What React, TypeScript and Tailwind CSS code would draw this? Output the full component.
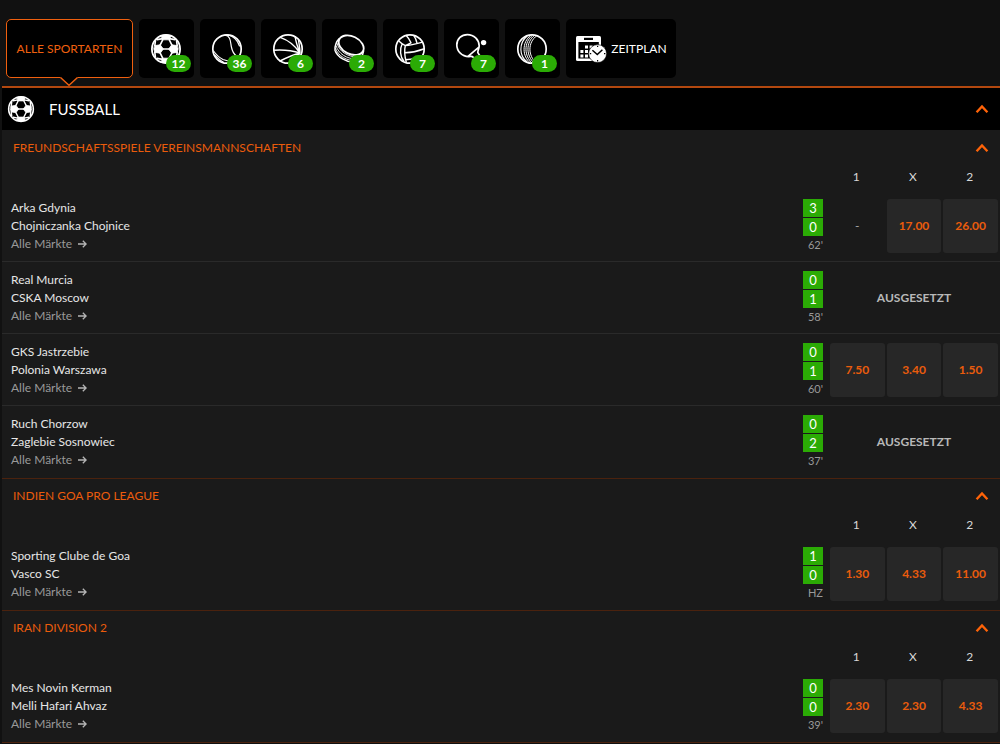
import type { ReactNode } from "react";

type Match = {
  home: string;
  away: string;
  score: [number, number];
  time: string;
  odds: (string | null)[] | null;
};

type League = { name: string; matches: Match[] };

const leagues: League[] = [
  {
    name: "FREUNDSCHAFTSSPIELE VEREINSMANNSCHAFTEN",
    matches: [
      { home: "Arka Gdynia", away: "Chojniczanka Chojnice", score: [3, 0], time: "62'", odds: [null, "17.00", "26.00"] },
      { home: "Real Murcia", away: "CSKA Moscow", score: [0, 1], time: "58'", odds: null },
      { home: "GKS Jastrzebie", away: "Polonia Warszawa", score: [0, 1], time: "60'", odds: ["7.50", "3.40", "1.50"] },
      { home: "Ruch Chorzow", away: "Zaglebie Sosnowiec", score: [0, 2], time: "37'", odds: null },
    ],
  },
  {
    name: "INDIEN GOA PRO LEAGUE",
    matches: [
      { home: "Sporting Clube de Goa", away: "Vasco SC", score: [1, 0], time: "HZ", odds: ["1.30", "4.33", "11.00"] },
    ],
  },
  {
    name: "IRAN DIVISION 2",
    matches: [
      { home: "Mes Novin Kerman", away: "Melli Hafari Ahvaz", score: [0, 0], time: "39'", odds: ["2.30", "2.30", "4.33"] },
    ],
  },
];

function Glyph({ children, className = "size-8" }: { children: ReactNode; className?: string }) {
  return (
    <svg viewBox="0 0 32 32" className={className} fill="none" stroke="white" strokeWidth="1.7" strokeLinecap="round" strokeLinejoin="round" aria-hidden="true">
      {children}
    </svg>
  );
}

function Football({ className }: { className?: string }) {
  return (
    <Glyph className={className}>
      <circle cx="16" cy="16" r="14.1" strokeWidth="1.8" />
      <g fill="white" strokeWidth="0.8">
        <path d="M4.8 12.6 L10.2 11.8 L13.4 16 L10.2 20.2 L4.8 19.4 L3.8 16 Z" />
        <path d="M27.2 12.6 L21.8 11.8 L18.6 16 L21.8 20.2 L27.2 19.4 L28.2 16 Z" />
        <path d="M10.8 2.6 Q16 1 21.2 2.6 L19.3 6.8 L12.7 6.8 Z" />
        <path d="M10.8 29.4 Q16 31 21.2 29.4 L19.3 25.2 L12.7 25.2 Z" />
      </g>
      <path d="M13 16H19M10.2 11.8L12.7 6.8M21.8 11.8L19.3 6.8M10.2 20.2L12.7 25.2M21.8 20.2L19.3 25.2M4.8 12.6L5.4 8.2M27.2 12.6L26.6 8.2M4.8 19.4L5.4 23.8M27.2 19.4L26.6 23.8M7 6.6L12.7 5.6M25 6.6L19.3 5.6M7 25.4L12.7 26.4M25 25.4L19.3 26.4" strokeWidth="1.6" />
    </Glyph>
  );
}

const sports: { label: string; count: number; icon: ReactNode }[] = [
  { label: "Fussball", count: 12, icon: <Football /> },
  {
    label: "Tennis",
    count: 36,
    icon: (
      <Glyph>
        <circle cx="16" cy="16" r="14.2" />
        <path d="M14 2.2C20 3 19.3 9 20.4 14C21.3 18.5 23 21.5 26 23.5M17 2C24 3.5 27 9 28.5 13" strokeWidth="1.2" />
        <path d="M2.6 18C5 21.5 8 24.5 12 26.4C16 28 20 28.4 23 28M3.6 22C7 25 9 27.5 12.5 29.3" strokeWidth="1.1" />
      </Glyph>
    ),
  },
  {
    label: "Basketball",
    count: 6,
    icon: (
      <Glyph>
        <circle cx="16" cy="16" r="14.2" />
        <path d="M8.2 4.3C16 7 23 12.5 28 20M1.9 17.2C11 16.6 20 17.4 28 20M23.2 3.8C24 10 26 15 28 20M26.5 7C27 11 28 15 28 20M28 20C22 21.5 14 25 8 28M28 20C26 24 23 27 20 29.6" strokeWidth="1.4" />
      </Glyph>
    ),
  },
  {
    label: "Eishockey",
    count: 2,
    icon: (
      <Glyph>
        <ellipse cx="18.2" cy="12.2" rx="13.2" ry="8.8" transform="rotate(26 18.2 12.2)" strokeWidth="1.8" />
        <path d="M6 5.8C3.6 8 1.4 13.5 2 17.2C4 23.6 13.6 30 22 29C26 28 30 23 30.6 18" strokeWidth="1.5" />
        <path d="M4.2 10.5C5.2 17.6 15 24.4 24 23.9M3.2 13C5 20.4 14.5 26.7 23.5 25.7M2.5 15.3C5 23 14 28.4 23 27.4" strokeWidth="0.9" />
      </Glyph>
    ),
  },
  {
    label: "Volleyball",
    count: 7,
    icon: (
      <Glyph>
        <circle cx="16" cy="16" r="14.2" />
        <path d="M5.4 8.4Q8 11 11.3 12.6C17 12.3 22.4 10.8 27.8 9.3M12.2 2.6Q15 5.5 17 9.8L11.3 12.6C10.3 17 10.6 23 12.2 28.8M20 2.8Q22.2 5.8 23 10.2M10.9 19.8C17 19.5 24 18.2 29.6 16M11.7 26.8C17 26.4 22 25.6 27 24.2M8.2 10.8C5.6 16 6 24 9.8 28" strokeWidth="1.4" />
      </Glyph>
    ),
  },
  {
    label: "Tischtennis",
    count: 7,
    icon: (
      <Glyph>
        <path d="M14 23.6C7 23.8 1.8 18.2 1.8 12C1.8 5.5 6.5 1.6 12.4 1.6C19 1.6 24 6.8 24.2 12.8C24.2 15.6 22.6 17.4 22.8 19.6L27 26L22.5 29L18.4 24.4C17 22.6 15.6 23.5 14 23.6ZM13 23.4L23.6 14.4" />
        <circle cx="28.6" cy="9.6" r="2.7" fill="white" stroke="none" />
      </Glyph>
    ),
  },
  {
    label: "Cricket",
    count: 1,
    icon: (
      <Glyph>
        <circle cx="16" cy="16" r="14.2" />
        <path d="M11 3.2C2.6 10 3.1 23 11 28.8" strokeWidth="1.1" />
        <path d="M14.4 2.5C5.6 9.5 6.2 23.5 14 29.7M16.4 2.2C7.4 9.8 8.2 23 16 30M18.4 2.4C9.4 9.5 10.2 23 18 30M20.6 2.8C11.4 9.5 12 23 20 29.6" strokeWidth="1" />
      </Glyph>
    ),
  },
];

function ScheduleIcon() {
  return (
    <svg viewBox="0 0 32 28" className="h-7 w-8" aria-hidden="true">
      <rect x="1" y="1" width="25" height="25" rx="1.5" fill="white" />
      <rect x="9" y="2.8" width="9" height="2.2" fill="black" />
      <rect x="3.4" y="7" width="20.4" height="16.5" fill="black" />
      <path d="M10 10.5h3v3h-3zM14.6 10.5h3v3h-3zM19.2 10.5h3v3h-3zM5.4 15h3v3h-3zM10 15h3v3h-3zM5.4 19.4h3v3h-3zM10 19.4h3v3h-3z" fill="white" />
      <circle cx="22.6" cy="18.6" r="9" fill="white" stroke="black" strokeWidth="0.6" />
      <path d="M17.4 15.2L22.3 19.5L27.4 14.8" fill="none" stroke="black" strokeWidth="1.5" />
      <path d="M22.6 10.7v1.4M22.6 25.1v1.4M14.8 18.6h1.4M29 18.6h1.4" stroke="black" strokeWidth="1.2" />
    </svg>
  );
}

function Chevron() {
  return (
    <svg viewBox="0 0 14 10" className="h-2.5 w-3.5" fill="none" stroke="#ff6308" strokeWidth="2.4" aria-hidden="true">
      <path d="M1.6 8.2L7 2.4L12.4 8.2" />
    </svg>
  );
}

function Odds({ match }: { match: Match }) {
  if (!match.odds) {
    return <div className="w-[168px] text-center text-xs font-bold text-[#b8b8b8]">AUSGESETZT</div>;
  }
  return (
    <div className="grid h-[54px] w-[168px] grid-cols-3 gap-0.5">
      {match.odds.map((odd, i) =>
        odd ? (
          <button key={i} type="button" className="rounded-[3px] bg-[#272727] text-xs font-bold text-[#ea5c0c]">
            {odd}
          </button>
        ) : (
          <span key={i} className="self-center text-center text-xs text-[#a8a8a8]">-</span>
        ),
      )}
    </div>
  );
}

function MatchRow({ match }: { match: Match }) {
  return (
    <li className="flex h-[72px] items-center border-b border-[#2a2a2a] pr-0.5 pl-[9px] last:border-b-0">
      <div className="flex-1 text-xs leading-[18px] text-[#e6e6e6]">
        <div>{match.home}</div>
        <div>{match.away}</div>
        <a href="#maerkte" className="flex items-center gap-1.5 text-[#999999]">
          Alle Märkte
          <svg viewBox="0 0 9 8" className="h-2 w-[9px]" fill="none" stroke="#b5b5b5" strokeWidth="1.3" aria-hidden="true">
            <path d="M0 4H8M4.8 0.7L8.1 4L4.8 7.3" />
          </svg>
        </a>
      </div>
      <div className="mr-[7px] flex flex-col items-end gap-px">
        {match.score.map((goals, i) => (
          <span key={i} className="h-[18px] w-5 bg-[#2bab05] text-center text-[13px] leading-[18px] text-white">
            {goals}
          </span>
        ))}
        <span className="h-4 text-[11px] leading-4 text-[#999999]">{match.time}</span>
      </div>
      <Odds match={match} />
    </li>
  );
}

function LeagueSection({ league }: { league: League }) {
  return (
    <section className="border-t border-[#4b220e] first:border-transparent">
      <div className="flex h-[34px] items-center justify-between pr-[11px] pl-[11px]">
        <h2 className="text-xs text-[#eb5c0c]">{league.name}</h2>
        <button type="button" aria-label={league.name + " einklappen"}>
          <Chevron />
        </button>
      </div>
      <div className="flex h-[25px] justify-end pr-[3px]">
        <div className="grid w-[168px] grid-cols-3 gap-0.5 text-center text-xs leading-6 text-[#d8d8d8]">
          <span>1</span>
          <span>X</span>
          <span>2</span>
        </div>
      </div>
      <ul>
        {league.matches.map((match) => (
          <MatchRow key={match.home} match={match} />
        ))}
      </ul>
    </section>
  );
}

export default function App() {
  return (
    <div className="min-h-screen bg-[#111111] font-['Lato',sans-serif]">
      <nav className="flex gap-1.5 px-1.5 pt-[19px] pb-2">
        <button type="button" className="relative h-[59px] w-[127px] rounded-[5px] border border-[#f0600f] bg-black text-xs text-[#f0600f]">
          ALLE SPORTARTEN
          <svg viewBox="0 0 18 9" className="absolute top-[57px] left-[53px] h-[9px] w-[18px]" aria-hidden="true">
            <path d="M0 0L9 8.5L18 0Z" fill="black" />
            <path d="M0.5 0.5L9 8.3L17.5 0.5" fill="none" stroke="#f0600f" strokeWidth="1.4" />
          </svg>
        </button>
        {sports.map((sport) => (
          <button key={sport.label} type="button" aria-label={sport.label} className="relative flex h-[59px] w-[55px] items-center justify-center rounded-[5px] bg-black pr-0.5">
            {sport.icon}
            <span className="absolute right-[3px] bottom-1.5 h-[17px] w-[25px] rounded-full bg-[#2bab05] text-center text-xs leading-[17px] font-bold text-white">
              {sport.count}
            </span>
          </button>
        ))}
        <button type="button" className="flex h-[59px] w-[110px] items-center justify-center gap-1 rounded-[5px] bg-black text-xs text-white">
          <ScheduleIcon />
          ZEITPLAN
        </button>
      </nav>
      <main className="ml-0.5 border-t-2 border-[#b3480f] bg-[#1a1a1a]">
        <header className="flex h-[42px] items-center bg-black pr-[11px] pl-[5px]">
          <Football className="size-7" />
          <h1 className="ml-3.5 flex-1 text-[15px] text-white">FUSSBALL</h1>
          <button type="button" aria-label="Fussball einklappen">
            <Chevron />
          </button>
        </header>
        <div className="border-b border-[#4b220e]">
          {leagues.map((league) => (
            <LeagueSection key={league.name} league={league} />
          ))}
        </div>
      </main>
    </div>
  );
}
